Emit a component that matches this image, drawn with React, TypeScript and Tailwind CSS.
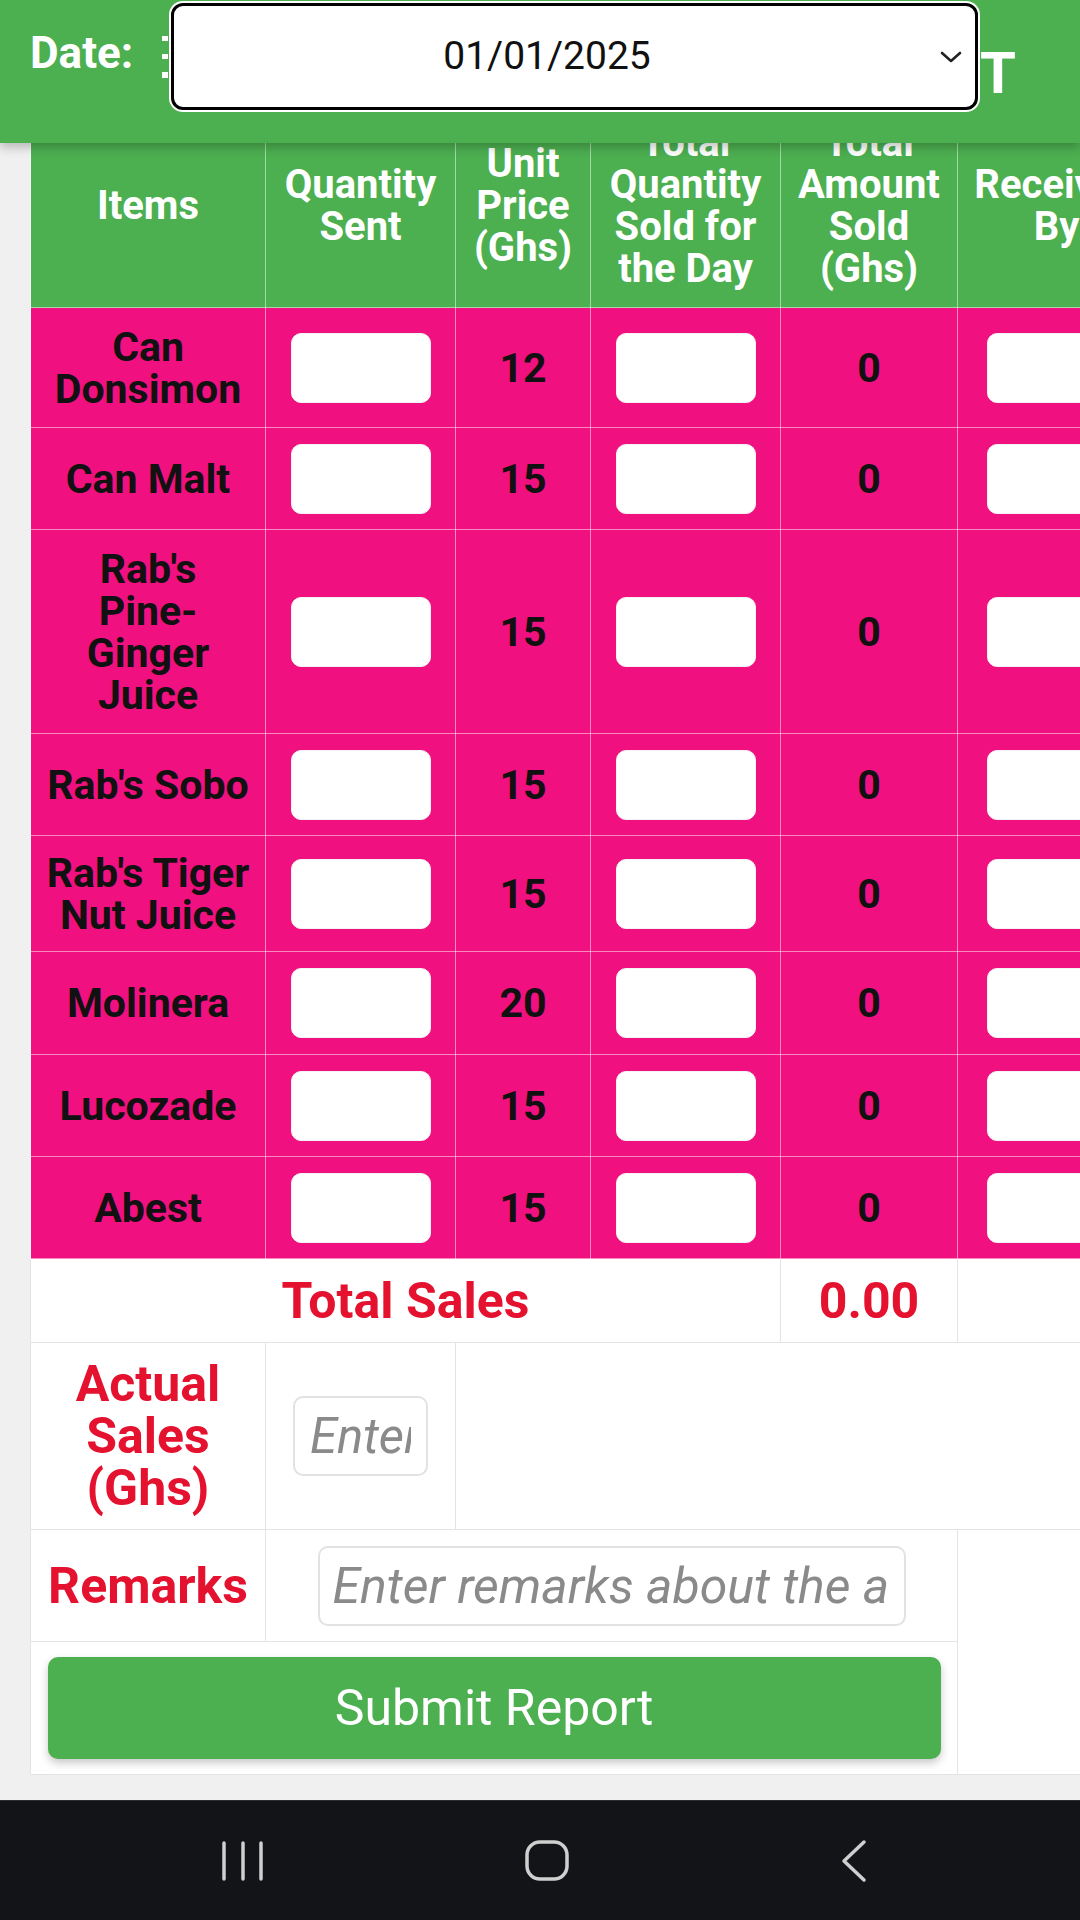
import React from 'react';

type Item = { name: string; price: number; rowH: string };

const items: Item[] = [
  { name: 'Can\nDonsimon', price: 12, rowH: 'h-[120px]' },
  { name: 'Can Malt', price: 15, rowH: 'h-[102px]' },
  { name: "Rab's\nPine-\nGinger\nJuice", price: 15, rowH: 'h-[204px]' },
  { name: "Rab's Sobo", price: 15, rowH: 'h-[102px]' },
  { name: "Rab's Tiger\nNut Juice", price: 15, rowH: 'h-[116px]' },
  { name: 'Molinera', price: 20, rowH: 'h-[103px]' },
  { name: 'Lucozade', price: 15, rowH: 'h-[102px]' },
  { name: 'Abest', price: 15, rowH: 'h-[102px]' },
];

const headers = ['Items', 'Quantity\nSent', 'Unit\nPrice\n(Ghs)', 'Total\nQuantity\nSold for\nthe Day', 'Total\nAmount\nSold\n(Ghs)', 'Received\nBy'];

const pinkCell = 'border border-white/50 px-[6px] text-center align-middle';
const whiteCell = 'border border-[#e4e4e4] text-center align-middle';

function CellInput() {
  return <input className="mx-auto block h-[70px] w-[140px] rounded-[10px] border border-[#f3f3f3] bg-white" />;
}

export default function App() {
  return (
    <div className="relative flex h-[1920px] w-[1080px] flex-col overflow-hidden bg-[#f0f0f0] font-[Roboto,sans-serif]">
      {/* Top bar */}
      <header className="relative z-10 h-[143px] shrink-0 bg-[#4caf50] shadow-[0_4px_10px_rgba(0,0,0,0.25)]">
        <div className="flex h-[113px] items-center pl-[30px]">
          <span className="mb-[8px] w-[132px] text-[44px] font-bold leading-[50px] text-white">Date:</span>
          <div className="flex h-[42px] w-[6px] flex-col justify-between">
            <span className="block h-[5px] w-[6px] bg-white" />
            <span className="block h-[5px] w-[6px] bg-white" />
            <span className="block h-[6px] w-[6px] bg-white" />
          </div>
          <div className="ml-[3px] flex h-[107px] w-[807px] items-center rounded-[12px] border-[3px] border-black bg-white ring-2 ring-white">
            <span className="flex-1 text-center text-[39px] text-[#111]">01/01/2025</span>
            <span className="flex w-[55px] pl-[20px]">
              <svg width="22" height="12" viewBox="0 0 22 12" fill="none" stroke="#222" strokeWidth="2.6" strokeLinecap="round" strokeLinejoin="round">
                <polyline points="2,2 11,10 20,2" />
              </svg>
            </span>
          </div>
          <span className="ml-[2px] mt-[32px] text-[58px] font-bold leading-none text-white">T</span>
        </div>
      </header>

      {/* Report table */}
      <div className="relative flex-1 overflow-hidden pl-[30px]">
        <table className="-mt-[40px] w-[1125px] table-fixed border-collapse">
          <colgroup>
            <col className="w-[235px]" />
            <col className="w-[190px]" />
            <col className="w-[135px]" />
            <col className="w-[190px]" />
            <col className="w-[177px]" />
            <col className="w-[198px]" />
          </colgroup>
          <thead>
            <tr className="h-[204px] bg-[#4caf50]">
              {headers.map((h) => (
                <th key={h} className="whitespace-pre-line border border-white/50 px-[4px] text-center align-middle text-[40px] font-bold leading-[42px] text-white">
                  {h}
                </th>
              ))}
            </tr>
          </thead>
          <tbody className="text-[41px] font-bold leading-[42px] text-[#111]">
            {items.map((it) => (
              <tr key={it.name} className={`${it.rowH} bg-[#f0107f]`}>
                <td className={`${pinkCell} whitespace-pre-line`}>{it.name}</td>
                <td className={pinkCell}><CellInput /></td>
                <td className={pinkCell}>{it.price}</td>
                <td className={pinkCell}><CellInput /></td>
                <td className={pinkCell}>0</td>
                <td className={pinkCell}><CellInput /></td>
              </tr>
            ))}

            <tr className="h-[84px] bg-white text-[50px] text-[#e4112f]">
              <td colSpan={4} className={whiteCell}>Total Sales</td>
              <td className={whiteCell}>0.00</td>
              <td className={whiteCell} />
            </tr>

            <tr className="h-[187px] bg-white">
              <td className={`${whiteCell} whitespace-pre-line text-[50px] leading-[52px] text-[#e4112f]`}>{'Actual\nSales\n(Ghs)'}</td>
              <td className={whiteCell}>
                <input
                  placeholder="Enter actual sales"
                  className="mx-auto block h-[80px] w-[135px] rounded-[10px] border-2 border-[#e2e2e2] bg-white px-[15px] text-[49px] font-normal italic placeholder:text-[#8a8a8a]"
                />
              </td>
              <td colSpan={4} className={whiteCell} />
            </tr>

            <tr className="h-[112px] bg-white">
              <td className={`${whiteCell} text-[50px] text-[#e4112f]`}>Remarks</td>
              <td colSpan={4} className={whiteCell}>
                <input
                  placeholder="Enter remarks about the actual sales"
                  className="mx-auto block h-[80px] w-[588px] rounded-[10px] border-2 border-[#e2e2e2] bg-white pl-[13px] pr-[15px] text-[50px] font-normal italic placeholder:text-[#8a8a8a]"
                />
              </td>
              <td rowSpan={2} className={whiteCell} />
            </tr>

            <tr className="h-[133px] bg-white">
              <td colSpan={5} className={whiteCell}>
                <button className="mx-auto block h-[102px] w-[893px] rounded-[10px] bg-[#4caf50] text-[50px] font-normal text-white shadow-[0_4px_8px_rgba(0,0,0,0.22)]">
                  Submit Report
                </button>
              </td>
            </tr>
          </tbody>
        </table>
      </div>

      {/* Android navigation bar */}
      <nav className="flex h-[120px] shrink-0 items-center border-t border-[#2c2d30] bg-[#131418] pl-[220px]">
        <svg width="46" height="42" viewBox="0 0 46 42" fill="none" stroke="#cfcfcf" strokeWidth="3.5" strokeLinecap="round">
          <line x1="4" y1="3" x2="4" y2="39" />
          <line x1="23" y1="3" x2="23" y2="39" />
          <line x1="41" y1="3" x2="41" y2="39" />
        </svg>
        <svg className="ml-[258px]" width="46" height="42" viewBox="0 0 46 42" fill="none" stroke="#cfcfcf" strokeWidth="3.5">
          <rect x="3" y="2" width="40" height="37" rx="13" />
        </svg>
        <svg className="ml-[270px]" width="28" height="44" viewBox="0 0 28 44" fill="none" stroke="#cfcfcf" strokeWidth="3.5" strokeLinecap="round" strokeLinejoin="round">
          <polyline points="24,3 4,22 24,41" />
        </svg>
      </nav>
    </div>
  );
}
